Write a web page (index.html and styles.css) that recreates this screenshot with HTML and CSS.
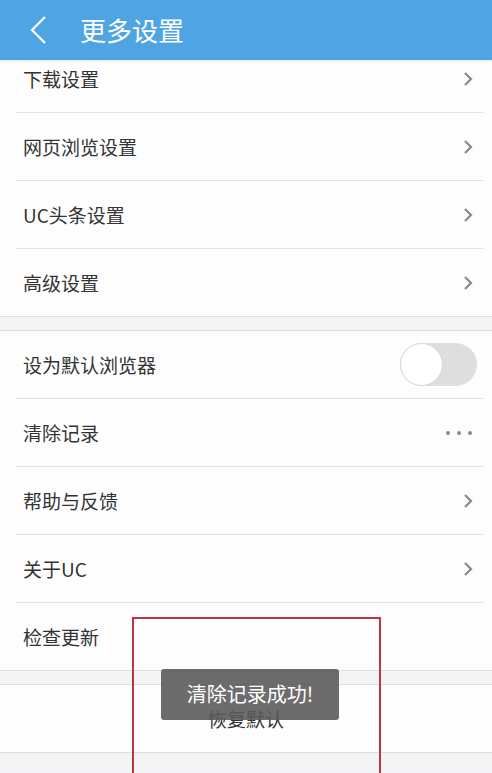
FILE: index.html
```html
<!DOCTYPE html>
<html lang="zh-CN">
<head>
    <meta charset="UTF-8">
    <meta name="viewport" content="width=device-width, initial-scale=1.0">
    <title>更多设置</title>
    <link rel="stylesheet" href="styles.css">
</head>
<body>

<div class="header">
    <svg class="back" width="20" height="30" viewBox="0 0 20 30">
        <polyline points="16,2 3,15 16,28" fill="none" stroke="#fff" stroke-width="2.2"/>
    </svg>
    <h1>更多设置</h1>
</div>

<div class="page">
    <div class="list first">
        <div class="row"><div class="inner"><span>下载设置</span><svg class="arrow" viewBox="0 0 10 16"><polyline points="2,2 8,8 2,14"/></svg></div></div>
        <div class="row"><div class="inner"><span>网页浏览设置</span><svg class="arrow" viewBox="0 0 10 16"><polyline points="2,2 8,8 2,14"/></svg></div></div>
        <div class="row"><div class="inner"><span>UC头条设置</span><svg class="arrow" viewBox="0 0 10 16"><polyline points="2,2 8,8 2,14"/></svg></div></div>
        <div class="row last"><div class="inner"><span>高级设置</span><svg class="arrow" viewBox="0 0 10 16"><polyline points="2,2 8,8 2,14"/></svg></div></div>
    </div>

    <div class="list">
        <div class="row"><div class="inner"><span>设为默认浏览器</span><div class="switch"><div class="knob"></div></div></div></div>
        <div class="row"><div class="inner"><span>清除记录</span><div class="dots"><i></i><i></i><i></i></div></div></div>
        <div class="row"><div class="inner"><span>帮助与反馈</span><svg class="arrow" viewBox="0 0 10 16"><polyline points="2,2 8,8 2,14"/></svg></div></div>
        <div class="row"><div class="inner"><span>关于UC</span><svg class="arrow" viewBox="0 0 10 16"><polyline points="2,2 8,8 2,14"/></svg></div></div>
        <div class="row last"><div class="inner"><span>检查更新</span></div></div>
    </div>

    <div class="list">
        <div class="row last center"><span>恢复默认</span></div>
    </div>

    <div class="toast">清除记录成功!</div>
    <div class="mark"></div>
</div>

</body>
</html>
```

FILE: styles.css
```css
body {
    margin: 0;
    font-family: "Noto Sans CJK SC", "Noto Sans", sans-serif;
    background-color: #f4f4f6;
    color: #333;
    height: 773px;
    overflow: hidden;
}
.header {
    position: relative;
    z-index: 2;
    height: 60px;
    background-color: #4fa5e3;
    display: flex;
    align-items: center;
    box-shadow: 0 1px 2px rgba(0, 0, 0, 0.1);
}
.back {
    margin-left: 29px;
}
.header h1 {
    margin: 0 0 2px 31px;
    font-size: 26px;
    font-weight: normal;
    color: #fff;
}
.page {
    position: relative;
    height: 713px;
    overflow: hidden;
}
.list {
    background-color: #fdfdfe;
    border-top: 1px solid #dedede;
    margin-bottom: 13px;
}
.list.first {
    border-top: none;
    margin-top: -15px;
}
.row {
    padding: 0 8px 0 16px;
}
.row .inner {
    height: 67px;
    border-bottom: 1px solid #e3e3e5;
    display: flex;
    align-items: center;
    justify-content: space-between;
    padding: 0 11px 0 7px;
    font-size: 19px;
}
.row.last {
    padding: 0;
    border-bottom: 1px solid #dedede;
}
.row.last .inner {
    border-bottom: none;
    padding-left: 23px;
    padding-right: 19px;
}
.row.center {
    height: 67px;
    display: flex;
    align-items: center;
    justify-content: center;
    font-size: 19px;
}
.arrow {
    width: 10px;
    height: 16px;
    fill: none;
    stroke: #8a8a8a;
    stroke-width: 2.2;
}
.switch {
    width: 77px;
    height: 43px;
    border-radius: 22px;
    background-color: #dedede;
    margin-right: -4px;
    position: relative;
}
.knob {
    position: absolute;
    left: 0;
    top: 0;
    width: 41px;
    height: 41px;
    border-radius: 50%;
    background-color: #fff;
    border: 1px solid #d8d8d8;
}
.dots {
    display: flex;
    gap: 7px;
    margin-right: 1px;
}
.dots i {
    width: 4px;
    height: 4px;
    border-radius: 50%;
    background-color: #8a8a8a;
}
.toast {
    position: absolute;
    left: 161px;
    top: 609px;
    width: 178px;
    height: 51px;
    border-radius: 3px;
    background-color: rgba(88, 88, 88, 0.88);
    color: #fff;
    font-size: 20px;
    display: flex;
    align-items: center;
    justify-content: center;
    padding-bottom: 2px;
    box-sizing: border-box;
}
.mark {
    position: absolute;
    left: 132px;
    top: 557px;
    width: 245px;
    height: 220px;
    border: 2px solid #c1343b;
}
```
